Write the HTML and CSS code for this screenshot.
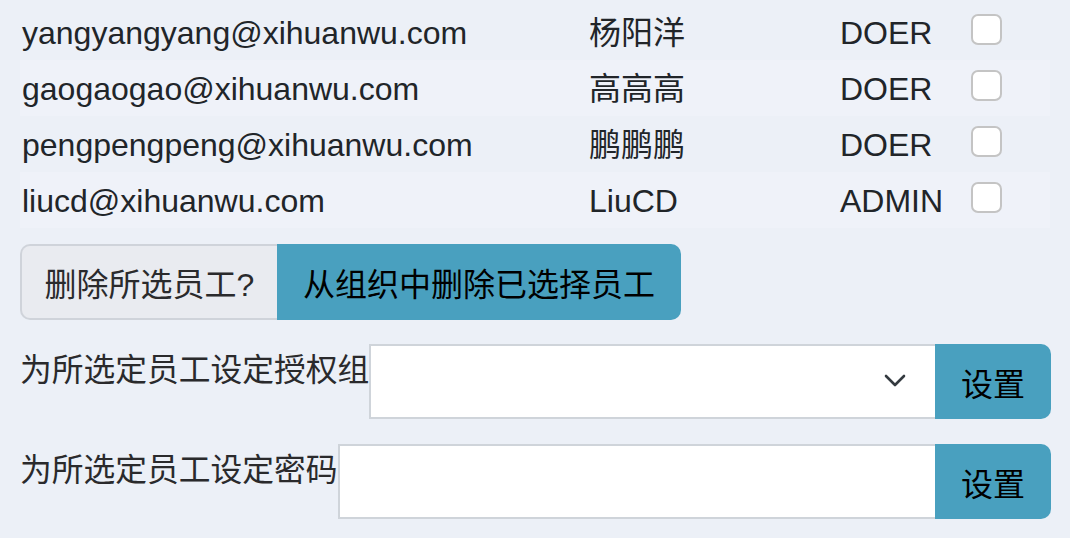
FILE: index.html
```html
<!DOCTYPE html>
<html lang="zh-CN">
<head>
<meta charset="utf-8">
<title>员工管理</title>
<link rel="stylesheet" href="styles.css">
</head>
<body>
<div class="page">
  <table class="staff">
    <colgroup>
      <col class="c-email"><col class="c-name"><col class="c-role"><col class="c-check">
    </colgroup>
    <tbody>
      <tr><td>yangyangyang@xihuanwu.com</td><td>杨阳洋</td><td>DOER</td><td><input type="checkbox" class="check"></td></tr>
      <tr><td>gaogaogao@xihuanwu.com</td><td>高高高</td><td>DOER</td><td><input type="checkbox" class="check"></td></tr>
      <tr><td>pengpengpeng@xihuanwu.com</td><td>鹏鹏鹏</td><td>DOER</td><td><input type="checkbox" class="check"></td></tr>
      <tr><td>liucd@xihuanwu.com</td><td>LiuCD</td><td>ADMIN</td><td><input type="checkbox" class="check"></td></tr>
    </tbody>
  </table>

  <div class="btn-group">
    <button class="btn btn-light">删除所选员工?</button>
    <button class="btn btn-teal">从组织中删除已选择员工</button>
  </div>

  <div class="form-row first">
    <label class="label">为所选定员工设定授权组</label>
    <div class="select-wrap">
      <select class="field select"><option></option></select>
      <svg class="chevron" width="22" height="14" viewBox="0 0 22 14"><path d="M2 2 L11 11 L20 2" fill="none" stroke="#343a40" stroke-width="2.6" stroke-linecap="round" stroke-linejoin="round"/></svg>
    </div>
    <button class="btn-set">设置</button>
  </div>

  <div class="form-row second">
    <label class="label">为所选定员工设定密码</label>
    <input type="password" class="field input">
    <button class="btn-set">设置</button>
  </div>
</div>
</body>
</html>
```

FILE: styles.css
```css
html, body {
  margin: 0;
  padding: 0;
  background: #ecf0f7;
}
body {
  font-family: "Liberation Sans", "Noto Sans CJK SC", sans-serif;
  font-size: 32px;
  color: #212529;
}
.page {
  width: 1031px;
  padding: 4px 0 0 20px;
}
.staff {
  width: 1030px;
  border-collapse: collapse;
  table-layout: fixed;
}
.c-email { width: 567px; }
.c-name { width: 251px; }
.c-role { width: 131px; }
.c-check { width: 81px; }
.staff td {
  padding: 3px 0 0 2px;
  height: 53px;
  line-height: 52px;
  vertical-align: top;
  white-space: nowrap;
}
.staff tr:nth-child(even) td {
  background: #eff2f9;
}
.check {
  -webkit-appearance: none;
  appearance: none;
  display: block;
  box-sizing: border-box;
  width: 31px;
  height: 31px;
  margin: 7px 0 0 0;
  border: 2px solid #c4c4c4;
  border-radius: 7px;
  background: #fff;
}
.btn-group {
  display: flex;
  margin-top: 16px;
  height: 76px;
}
.btn {
  font-family: "Liberation Sans", "Noto Sans CJK SC", sans-serif;
  font-size: 32px;
  box-sizing: border-box;
  height: 76px;
  margin: 0;
  padding: 0;
  text-align: center;
}
.btn-light {
  width: 257px;
  background: #e9ebf0;
  color: #2a2a2c;
  border: 2px solid #cfd3da;
  border-right: none;
  border-radius: 10px 0 0 10px;
}
.btn-teal {
  width: 404px;
  background: #49a0bf;
  color: #000;
  border: none;
  border-radius: 0 10px 10px 0;
}
.form-row {
  display: flex;
  align-items: flex-start;
  height: 75px;
}
.form-row.first { margin-top: 24px; }
.form-row.second { margin-top: 25px; }
.label {
  font-size: 31.75px;
  line-height: 40px;
  margin-top: 6px;
  color: #2a2a2c;
  white-space: nowrap;
}
.select-wrap {
  position: relative;
  flex: 1;
  height: 75px;
}
.field {
  box-sizing: border-box;
  height: 75px;
  margin: 0;
  border: 2px solid #cfd4da;
  border-right: none;
  border-radius: 0;
  background: #fff;
  font-size: 32px;
  font-family: "Liberation Sans", "Noto Sans CJK SC", sans-serif;
  outline: none;
}
.select {
  -webkit-appearance: none;
  appearance: none;
  width: 100%;
  display: block;
}
.input {
  flex: 1;
  min-width: 0;
  padding: 0 16px;
}
.chevron {
  position: absolute;
  right: 29px;
  top: 30px;
}
.btn-set {
  width: 116px;
  height: 75px;
  box-sizing: border-box;
  margin: 0;
  padding: 0;
  border: none;
  border-radius: 0 10px 10px 0;
  background: #49a0bf;
  color: #000;
  font-family: "Liberation Sans", "Noto Sans CJK SC", sans-serif;
  font-size: 32px;
  text-align: center;
}
```
